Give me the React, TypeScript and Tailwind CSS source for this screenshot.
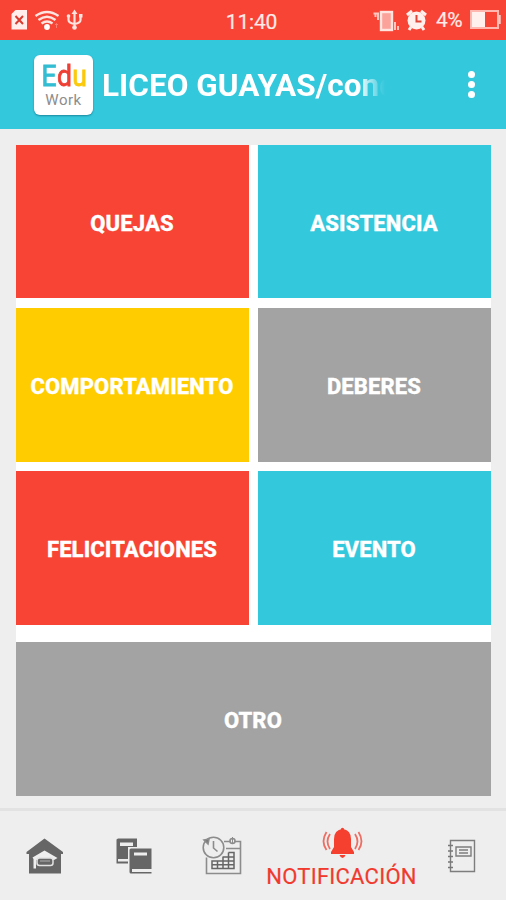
import React from "react";

function StatusBar() {
  return (
    <header className="grid h-10 shrink-0 grid-cols-[1fr_auto_1fr] items-center bg-[#f74435] text-[#ffeae7]">
      <div className="flex h-10 items-center">
        <svg width="90" height="40" viewBox="0 0 90 40" fill="none">
          <path d="M15.500 10H27v19.500H11.500V14z" fill="#ffeeeb" />
          <path d="m15.500 16 7.500 8m0-8-7.500 8" stroke="#d93c31" strokeWidth="2" />
          <g stroke="#ffe3df" strokeWidth="2.500">
            <path d="M35.500 16q11.500-8 23 0" />
            <path d="M38.500 20q8.500-6.500 17 0" />
            <path d="M41.500 23.500q5.500-4 11 0" />
          </g>
          <circle cx="47" cy="27" r="2.900" fill="#fff" />
          <path d="M56.500 24v4m-1.500-3 1.500-1.500L58 25" stroke="#fa7d72" />
          <g stroke="#ffe3df" strokeWidth="2.200">
            <path d="M74.500 12v16M68.500 16v4q0 3 6 4 6-1 6-4v-4" />
          </g>
          <g fill="#ffe3df">
            <path d="m74.500 9.500 3 4.500h-6z" />
            <circle cx="68.500" cy="16" r="1.800" />
            <path d="M79 14h3.500v3.500H79z" />
            <circle cx="74.500" cy="27.500" r="2.300" />
          </g>
        </svg>
      </div>
      <span className="mr-[3px] pt-[4px] text-[21px] leading-none tracking-[-0.2px] [-webkit-text-stroke:0.2px]">11:40</span>
      <div className="flex h-10 items-center justify-end">
        <svg width="60" height="40" viewBox="370 0 60 40" fill="none">
          <rect x="381" y="12" width="11" height="18" fill="#fba39b" stroke="#ffe3df" strokeWidth="2.400" />
          <path d="M373.500 13.500h5.500M378 13v7M375.500 13v4M395 22v8M398 26v4" stroke="#fdc5be" strokeWidth="2" />
          <circle cx="416.500" cy="20.500" r="9" fill="#fff0ed" />
          <path d="m407 15 5-4m9 0 5 4M411 27l-2 3m13-3 2 3" stroke="#fff0ed" strokeWidth="3" />
          <path d="M416.500 15v6.500h5" stroke="#df4437" strokeWidth="2" />
        </svg>
        <span className="w-[40px] pl-[6px] text-[21px] leading-none tracking-[-0.6px] [-webkit-text-stroke:0.2px]">4%</span>
        <svg width="36" height="40" viewBox="470 0 36 40" fill="none">
          <path d="M471 11h27v17h-27z" stroke="#ffb7b0" strokeWidth="2" />
          <path d="M472 12h13v15h-13z" fill="#fff0ed" />
          <path d="M499.500 15v9" stroke="#fdc5be" strokeWidth="2.500" />
        </svg>
      </div>
    </header>
  );
}

function AppBar() {
  return (
    <div className="flex h-[89px] shrink-0 items-center bg-[#34c8dd] pl-[34px]">
      <div className="mt-px flex h-[60px] w-[59px] flex-col items-center rounded-[6px] bg-white shadow-[0_1px_2px_rgba(0,60,80,0.45)]">
        <div className="mt-[7px] ml-px flex origin-center scale-x-[0.9] text-[29.5px] leading-[28px] font-normal tracking-[0.3px] [-webkit-text-stroke:0.8px]">
          <span className="text-[#33bdd2]">E</span>
          <span className="text-[#ef4035]">d</span>
          <span className="text-[#fbc90d]">u</span>
        </div>
        <span className="mt-[2px] text-[15px] leading-[16px] tracking-[0.5px] text-[#8d8d8d]">Work</span>
      </div>
      <h1 className="mt-[3px] ml-[9px] w-[285px] whitespace-nowrap mask-[linear-gradient(to_right,black_256px,transparent_283px)] text-[31.5px] leading-[40px] font-bold tracking-[0.03px] text-white">
        LICEO GUAYAS/con<span className="text-white/70">d</span>
      </h1>
      <div className="ml-[81px] flex flex-col gap-[3px]">
        <i className="size-[7px] rounded-full bg-white" />
        <i className="size-[7px] rounded-full bg-white" />
        <i className="size-[7px] rounded-full bg-white" />
      </div>
    </div>
  );
}

function Tile({ label, className }: { label: string; className: string }) {
  return (
    <button className={`flex items-center justify-center pt-[4px] text-[22px] leading-none font-extrabold tracking-[0.12px] text-white [-webkit-text-stroke:0.3px_white] ${className}`}>
      {label}
    </button>
  );
}

function HomeIcon() {
  return (
    <svg width="38" height="38" viewBox="26 836 38 38" fill="none">
      <path d="M44.500 837.500 26.500 851v2H29v19.500h32V853h2v-2z" fill="#666" />
      <path d="m32.500 856.500 12-7 13 7.500-3.500 2H36v8.500h-2.500V858z" fill="#eee" />
      <rect x="37" y="857" width="16" height="7.500" rx="2.500" fill="#666" stroke="#e2e2e2" strokeWidth="1.500" />
      <path d="M40 860h10" stroke="#999" strokeWidth="1.500" />
    </svg>
  );
}

function BooksIcon() {
  return (
    <svg width="38" height="38" viewBox="115 837 38 38" fill="none">
      <path d="M118 838.500h19v25h-20.500v-24z" fill="#666" />
      <path d="M120 842.500h13v3.500h-13zM118 859H137v2.500h-19z" fill="#eee" />
      <path d="M128 847h26v28h-26z" fill="#eee" />
      <path d="M131 848.500h20.500V869H132v3h19.500v1.500H131q-1.500 0-1.500-1.500V850q0-1.500 1.500-1.500z" fill="#666" />
      <path d="M134 852.500h13v3h-13z" fill="#eee" />
    </svg>
  );
}

function CalendarIcon() {
  return (
    <svg width="42" height="40" viewBox="201 836 42 40" fill="none" stroke="#8c8c8c" strokeWidth="1.600">
      <path d="M224 841.500h16.500v32h-34v-16M226 848.500h14" />
      <circle cx="213.500" cy="847.500" r="10.300" fill="#eee" />
      <path d="M213.500 841v7l4 3.500" />
      <path d="m204 840 5-1-1 5z" fill="#777" />
      <circle cx="232.500" cy="841" r="2.500" fill="#eee" />
      <path d="M232.500 837v7" strokeWidth="1" />
      <path d="M228.500 852.500h5.500v16h-22v-7.500h22M222.500 857h11.500M212 864.800h22M217.500 861v7.500M223 857v11.500M228.500 852.500v16" stroke="#666" strokeWidth="1.500" />
    </svg>
  );
}

function BellIcon() {
  return (
    <svg width="42" height="34" viewBox="321 826 42 34" fill="none">
      <path d="M342.500 829q8.500 1 8.500 10v8l3 5v2h-23v-2l3-5v-8q0-9 8.500-10z" fill="#f6402f" />
      <path d="M339.500 855h6q-1 3-3 3t-3-3z" fill="#f6402f" />
      <circle cx="342.500" cy="829.500" r="1.700" fill="#f6402f" />
      <g stroke="#ee6d62" strokeWidth="1.800">
        <path d="M330 834q-5 7.500 0 15M326.500 832q-6 9.500 0 18M355 834q5 7.500 0 15M358.500 832q6 9.500 0 18" />
      </g>
    </svg>
  );
}

function NotebookIcon() {
  return (
    <svg width="30" height="36" viewBox="447 838 30 36" fill="none" stroke="#7d7d7d" strokeWidth="1.400">
      <path d="M450.500 840.500h24v31h-24z" />
      <path d="M448 845.500h5m-5 5.500h5m-5 5.500h5m-5 5.500h5m-5 5.500h5" stroke="#777" strokeWidth="1.600" />
      <path d="M456 847h15v9h-15zM459 850h9m-9 3h9" />
    </svg>
  );
}

function BottomNav() {
  return (
    <nav className="mt-3 flex h-[92px] border-t-[3px] border-[#e2e2e2] text-[#f03a2e]">
      <button className="flex w-[89px] items-center justify-center"><HomeIcon /></button>
      <button className="flex w-[89px] items-center justify-center"><BooksIcon /></button>
      <button className="flex w-[88px] items-center justify-center"><CalendarIcon /></button>
      <button className="flex w-[151px] flex-col items-center pt-[15px]">
        <BellIcon />
        <span className="mt-[5px] text-[22px] leading-[24px] tracking-[0.25px] [-webkit-text-stroke:0.2px]">NOTIFICACIÓN</span>
      </button>
      <button className="flex w-[89px] items-center justify-center"><NotebookIcon /></button>
    </nav>
  );
}

export default function App() {
  return (
    <div className="flex h-[900px] w-[506px] flex-col overflow-hidden bg-[#eee] font-[Roboto,sans-serif]">
      <StatusBar />
      <AppBar />
      <main className="mx-auto mt-4 flex h-[651px] w-[475px] shrink-0 flex-col justify-between bg-white">
        <div className="grid h-[480px] grid-cols-2 grid-rows-[153px_154px_154px] gap-x-[9px] gap-y-[9.5px]">
          <Tile label="QUEJAS" className="bg-[#f74435]" />
          <Tile label="ASISTENCIA" className="bg-[#34c8dd]" />
          <Tile label="COMPORTAMIENTO" className="bg-[#ffcc00]" />
          <Tile label="DEBERES" className="bg-[#a3a3a3]" />
          <Tile label="FELICITACIONES" className="bg-[#f74435]" />
          <Tile label="EVENTO" className="bg-[#34c8dd]" />
        </div>
        <Tile label="OTRO" className="h-[154.5px] bg-[#a3a3a3]" />
      </main>
      <BottomNav />
    </div>
  );
}
